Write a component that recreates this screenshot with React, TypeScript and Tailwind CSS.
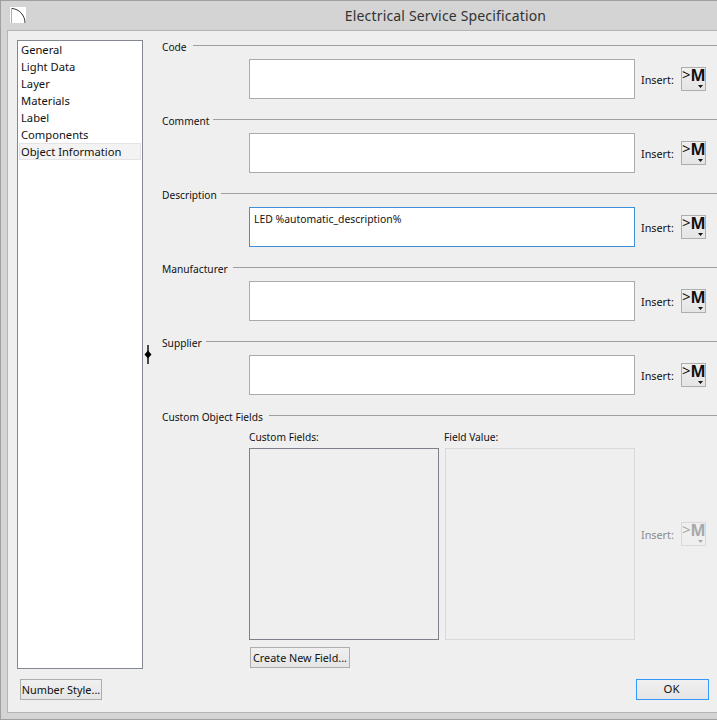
const ui = "font-['Liberation_Sans',sans-serif]";

function MacroButton({ disabled = false, top }: { disabled?: boolean; top: number }) {
  const c = disabled ? "#a8a8a8" : "#111111";
  return (
    <div
      className={`absolute left-[681px] w-[25px] h-[24px] border ${disabled ? "border-[#d9d9d9] bg-[#efefef]" : "border-[#adadad] bg-gradient-to-b from-[#f0f0f0] to-[#e5e5e5]"}`}
      style={{ top }}
    >
      <div className={`absolute left-0 top-[-3px] whitespace-nowrap text-[16px] leading-[20px] font-bold ${ui}`} style={{ color: c }}>
        <span className="relative top-[-1px] text-[15px] font-normal">&gt;</span>M
      </div>
      <svg className="absolute left-[16px] top-[17px]" width="6" height="4" viewBox="0 0 6 4"><path d="M0 0h5L2.5 3z" fill={c} /></svg>
    </div>
  );
}

const sections = [
  { label: "Code", y: 39, line: 193 },
  { label: "Comment", y: 113, line: 213 },
  { label: "Description", y: 187, line: 221, value: "LED %automatic_description%", focus: true },
  { label: "Manufacturer", y: 261, line: 233 },
  { label: "Supplier", y: 335, line: 206 },
];

const nav = ["General", "Light Data", "Layer", "Materials", "Label", "Components", "Object Information"];

export default function App() {
  return (
    <div className={`relative w-[717px] h-[720px] overflow-hidden bg-[#d4d4d4] text-[10.2px] leading-[16px] text-[#111] ${ui}`}>
      <div className="absolute inset-x-0 top-0 h-px bg-[#a0a0a0]" />
      <div className="absolute left-0 top-0 bottom-0 w-px bg-[#a0a0a0]" />
      <div className="absolute inset-x-0 bottom-0 h-px bg-[#a0a0a0]" />

      <div className="absolute left-[10px] top-[7px] w-[16px] h-[16px] bg-white">
        <svg width="16" height="16" viewBox="0 0 16 16" fill="none">
          <path d="M1.5 1v15" stroke="#a4c05c" />
          <path d="M2 1.5C9 2 15 8 15 16" stroke="#333" strokeWidth="1" />
        </svg>
      </div>
      <div className="absolute left-0 right-0 top-[6px] h-[20px] text-center text-[14px] tracking-[0.17px] leading-[20px] text-[#333] pl-[174px] font-['Noto_Sans',sans-serif]">
        Electrical Service Specification
      </div>

      <div className="absolute left-[7px] top-[30px] right-0 bottom-[7px] bg-[#efefef] border-l border-t border-b border-[#b4b4b4]" />

      <div className="absolute left-[17px] top-[40px] w-[126px] h-[629px] bg-white border border-[#828790] px-[1px] text-[11.2px] font-['Noto_Sans',sans-serif]">
        {nav.map((n, i) => (
          <div
            key={n}
            className={`h-[17px] pl-[2px] leading-[17px] whitespace-nowrap ${i === 6 ? "bg-[#f3f3f3] shadow-[inset_0_0_0_1px_#e4e4e4]" : ""}`}
          >
            {n}
          </div>
        ))}
      </div>

      <svg className="absolute left-[144px] top-[345px]" width="8" height="20" viewBox="0 0 8 20">
        <path d="M4 0v19" stroke="#000" strokeWidth="1.4" />
        <path d="M4 5.5L7.5 9.5 4 13.5 .5 9.5z" fill="#000" />
      </svg>

      {sections.map((s) => (
        <div key={s.label}>
          <div className="absolute left-[162px] whitespace-nowrap" style={{ top: s.y }}>{s.label}</div>
          <div className="absolute right-0 h-px bg-[#a0a0a0]" style={{ left: s.line, top: s.y + 6 }} />
          <div
            className={`absolute left-[249px] w-[386px] h-[40px] bg-white border pl-[4px] pt-[3px] text-[10.4px] ${s.focus ? "border-[#3c8fd9]" : "border-[#ababab]"}`}
            style={{ top: s.y + 20 }}
          >
            {s.value}
          </div>
          <div className="absolute left-[641px] text-[10.8px]" style={{ top: s.y + 33 }}>Insert:</div>
          <MacroButton top={s.y + 28} />
        </div>
      ))}

      <div className="absolute left-[162px] top-[409px] whitespace-nowrap">Custom Object Fields</div>
      <div className="absolute left-[269px] right-0 top-[415px] h-px bg-[#a0a0a0]" />
      <div className="absolute left-[249px] top-[429px] text-[10.2px]">Custom Fields:</div>
      <div className="absolute left-[444px] top-[429px] text-[10.2px]">Field Value:</div>
      <div className="absolute left-[249px] top-[448px] w-[190px] h-[192px] bg-[#efefef] border border-[#7f7f8a]" />
      <div className="absolute left-[445px] top-[448px] w-[190px] h-[192px] bg-[#efefef] border border-[#d9d9d9]" />
      <div className="absolute left-[641px] top-[527px] text-[10.8px] text-[#8a8a8a]">Insert:</div>
      <MacroButton disabled top={522} />

      <div className="absolute left-[250px] top-[647px] w-[100px] h-[21px] border border-[#adadad] bg-gradient-to-b from-[#f0f0f0] to-[#e5e5e5] text-center text-[10.8px] leading-[20px] whitespace-nowrap">Create New Field...</div>
      <div className="absolute left-[20px] top-[679px] w-[82px] h-[21px] border border-[#adadad] bg-gradient-to-b from-[#f0f0f0] to-[#e5e5e5] text-center text-[10.9px] leading-[20px] whitespace-nowrap">Number Style...</div>
      <div className="absolute left-[636px] top-[679px] w-[73px] h-[21px] border-[1.5px] border-[#3399ff] bg-gradient-to-b from-[#f0f0f0] to-[#e5e5e5] text-center text-[11.4px] leading-[18px] pr-[2px]">OK</div>
    </div>
  );
}
